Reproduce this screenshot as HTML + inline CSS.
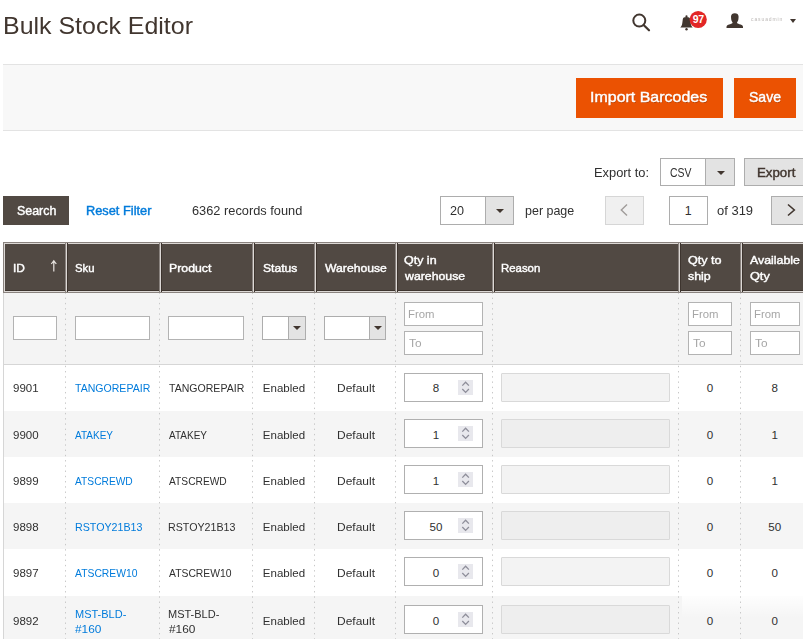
<!DOCTYPE html>
<html><head><meta charset="utf-8"><style>
*{box-sizing:border-box;margin:0;padding:0}
html,body{width:803px;height:639px;overflow:hidden;background:#fff;font-family:"Liberation Sans",sans-serif;color:#303030}
.a{position:absolute}
.t{white-space:nowrap}
</style></head><body>
<div class="a t" style="left:2.75px;top:14.13px;font-size:23.8px;line-height:23.8px;color:#41362f;font-weight:normal;letter-spacing:0.000px;transform:scaleX(1.0484);transform-origin:0 0;">Bulk Stock Editor</div>
<svg class="a" style="left:628px;top:9px" width="26" height="26" viewBox="0 0 26 26">
<circle cx="11.3" cy="11.6" r="6" fill="none" stroke="#41362f" stroke-width="2"/>
<line x1="15.6" y1="16" x2="21" y2="21.3" stroke="#41362f" stroke-width="2.2" stroke-linecap="round"/>
</svg>
<svg class="a" style="left:676px;top:10px" width="36" height="24" viewBox="0 0 36 24">
<path d="M4.3 17.4 C5.3 16.6 6 15.5 6.3 13 L6.8 9.2 C7 7.7 8 7 10.5 7 C13 7 14 7.7 14.2 9.2 L14.7 13 C15 15.5 15.7 16.6 16.7 17.4 Z" fill="#41362f"/>
<circle cx="10.5" cy="6.4" r="1.1" fill="#41362f"/>
<circle cx="10.5" cy="19.2" r="1.2" fill="#41362f"/>
<circle cx="22.2" cy="9.5" r="8.6" fill="#e22626"/>
<text x="22.2" y="13.1" font-family="Liberation Sans" font-weight="bold" font-size="10.5" fill="#fff" text-anchor="middle" letter-spacing="-0.3">97</text>
</svg>
<svg class="a" style="left:724px;top:10px" width="24" height="22" viewBox="0 0 24 22">
<path d="M7 6.8 C7 4.3 8.6 3.2 10.8 3.2 C13 3.2 14.6 4.3 14.6 6.8 L14.4 9.2 C14.2 10.6 13.6 11.6 13.1 12.2 L13.1 13 C13.6 13.6 15 14 16.6 14.5 C18.4 15.1 19 15.8 19 17 L19 18 L2.5 18 L2.5 17 C2.5 15.8 3.2 15.1 5 14.5 C6.6 14 8 13.6 8.5 13 L8.5 12.2 C8 11.6 7.4 10.6 7.2 9.2 Z" fill="#41362f"/>
</svg>
<div class="a t" style="left:751px;top:16.3px;font-size:5px;line-height:6px;color:#8d8683;letter-spacing:0.9px;filter:blur(0.3px);opacity:.6">casuadmin</div>
<div class="a" style="left:790px;top:19.3px;width:0;height:0;border-left:3.4px solid transparent;border-right:3.4px solid transparent;border-top:4.4px solid #41362f"></div>
<div class="a " style="left:3px;top:64px;width:800px;height:67px;background:#f8f8f8;border-top:1px solid #e3e3e3;border-bottom:1px solid #e3e3e3"></div>
<div class="a " style="left:576px;top:78px;width:147px;height:40px;background:#eb5202"></div>
<div class="a t" style="left:589.63px;top:90.11px;font-size:14.5px;line-height:14.5px;color:#fff;font-weight:normal;letter-spacing:0.000px;transform:scaleX(1.1016);transform-origin:0 0;-webkit-text-stroke:0.4px #fff;text-shadow:0.5px 0.5px 0 rgba(0,0,0,.25)">Import Barcodes</div>
<div class="a " style="left:734px;top:78px;width:62px;height:40px;background:#eb5202"></div>
<div class="a t" style="left:748.66px;top:90.11px;font-size:14.5px;line-height:14.5px;color:#fff;font-weight:normal;letter-spacing:0.000px;transform:scaleX(0.9683);transform-origin:0 0;-webkit-text-stroke:0.4px #fff;text-shadow:0.5px 0.5px 0 rgba(0,0,0,.25)">Save</div>
<div class="a t" style="left:594.14px;top:167.02px;font-size:12.4px;line-height:12.4px;color:#303030;font-weight:normal;letter-spacing:0.000px;transform:scaleX(1.0382);transform-origin:0 0;">Export to:</div>
<div class="a " style="left:660px;top:158px;width:75px;height:28px;background:#fff;border:1px solid #adadad"></div>
<div class="a " style="left:705px;top:158px;width:30px;height:28px;background:#e3e3e3;border:1px solid #adadad"></div>
<div class="a t" style="left:669.97px;top:167.02px;font-size:12.4px;line-height:12.4px;color:#303030;font-weight:normal;letter-spacing:0.000px;transform:scaleX(0.8437);transform-origin:0 0;">CSV</div>
<div class="a" style="left:716.5px;top:170.5px;width:0;height:0;border-left:4px solid transparent;border-right:4px solid transparent;border-top:4.5px solid #41362f"></div>
<div class="a " style="left:744px;top:158px;width:66px;height:28px;background:#e3e3e3;border:1px solid #adadad"></div>
<div class="a t" style="left:757.21px;top:166.92px;font-size:12px;line-height:12px;color:#41362f;font-weight:normal;letter-spacing:0.000px;transform:scaleX(1.1060);transform-origin:0 0;-webkit-text-stroke:0.4px #41362f;">Export</div>
<div class="a " style="left:3px;top:196px;width:66px;height:29px;background:#514943"></div>
<div class="a t" style="left:17.14px;top:204.72px;font-size:12px;line-height:12px;color:#fff;font-weight:normal;letter-spacing:0.000px;transform:scaleX(1.0354);transform-origin:0 0;-webkit-text-stroke:0.4px #fff;">Search</div>
<div class="a t" style="left:86.15px;top:204.72px;font-size:12px;line-height:12px;color:#007bdb;font-weight:normal;letter-spacing:0.000px;transform:scaleX(1.0661);transform-origin:0 0;-webkit-text-stroke:0.4px #007bdb;">Reset Filter</div>
<div class="a t" style="left:191.95px;top:205.32px;font-size:12.4px;line-height:12.4px;color:#303030;font-weight:normal;letter-spacing:0.000px;transform:scaleX(1.0325);transform-origin:0 0;">6362 records found</div>
<div class="a " style="left:440px;top:196px;width:74px;height:29px;background:#fff;border:1px solid #adadad"></div>
<div class="a " style="left:485px;top:196px;width:29px;height:29px;background:#e3e3e3;border:1px solid #adadad"></div>
<div class="a t" style="left:450.07px;top:205.32px;font-size:12.4px;line-height:12.4px;color:#303030;font-weight:normal;letter-spacing:0.000px;transform:scaleX(1.0171);transform-origin:0 0;">20</div>
<div class="a" style="left:495.5px;top:209px;width:0;height:0;border-left:4px solid transparent;border-right:4px solid transparent;border-top:4.5px solid #41362f"></div>
<div class="a t" style="left:525.0px;top:205.23px;font-size:12.6px;line-height:12.6px;color:#303030;font-weight:normal;letter-spacing:0.000px;transform:scaleX(0.9906);transform-origin:0 0;">per page</div>
<div class="a " style="left:605px;top:196px;width:39px;height:29px;background:#f0f0f0;border:1px solid #d6d6d6"></div>
<svg class="a" style="left:619px;top:203px" width="10" height="14" viewBox="0 0 10 14"><path d="M8 1.5 L2.3 7 L8 12.5" fill="none" stroke="#a09c9a" stroke-width="1.4"/></svg>
<div class="a " style="left:669px;top:196px;width:39px;height:29px;background:#fff;border:1px solid #adadad"></div>
<div class="a t" style="left:588.20px;width:200px;text-align:center;top:205.12px;font-size:12.4px;line-height:12.4px;color:#303030;font-weight:normal;letter-spacing:0.000px;">1</div>
<div class="a t" style="left:716.95px;top:205.12px;font-size:12.4px;line-height:12.4px;color:#303030;font-weight:normal;letter-spacing:0.000px;transform:scaleX(1.0472);transform-origin:0 0;">of 319</div>
<div class="a " style="left:771px;top:196px;width:39px;height:29px;background:#e3e3e3;border:1px solid #adadad"></div>
<svg class="a" style="left:786px;top:203px" width="10" height="14" viewBox="0 0 10 14"><path d="M2 1.5 L8.3 7 L2 12.5" fill="none" stroke="#41362f" stroke-width="1.6"/></svg>
<div class="a" style="left:3px;top:242px;width:806px;height:51px;background:#514943;border:1px solid #8a837f"></div>
<div class="a" style="left:4px;top:243px;width:804px;height:49px;border:1px solid #dcd8d5;border-right:none"></div>
<div class="a" style="left:5px;top:290px;width:803px;height:1px;background:#3d342e"></div>
<div class="a" style="left:65px;top:243px;width:3px;height:49px;background:#dcd8d5;border-left:1px solid #8a837f;border-right:1px solid #3d342e"></div>
<div class="a" style="left:159px;top:243px;width:3px;height:49px;background:#dcd8d5;border-left:1px solid #8a837f;border-right:1px solid #3d342e"></div>
<div class="a" style="left:252px;top:243px;width:3px;height:49px;background:#dcd8d5;border-left:1px solid #8a837f;border-right:1px solid #3d342e"></div>
<div class="a" style="left:314px;top:243px;width:3px;height:49px;background:#dcd8d5;border-left:1px solid #8a837f;border-right:1px solid #3d342e"></div>
<div class="a" style="left:395px;top:243px;width:3px;height:49px;background:#dcd8d5;border-left:1px solid #8a837f;border-right:1px solid #3d342e"></div>
<div class="a" style="left:492px;top:243px;width:3px;height:49px;background:#dcd8d5;border-left:1px solid #8a837f;border-right:1px solid #3d342e"></div>
<div class="a" style="left:678px;top:243px;width:3px;height:49px;background:#dcd8d5;border-left:1px solid #8a837f;border-right:1px solid #3d342e"></div>
<div class="a" style="left:740px;top:243px;width:3px;height:49px;background:#dcd8d5;border-left:1px solid #8a837f;border-right:1px solid #3d342e"></div>
<div class="a t" style="left:12.9px;top:262.70px;font-size:11px;line-height:11px;color:#fff;font-weight:normal;letter-spacing:0.000px;transform:scaleX(1.0789);transform-origin:0 0;-webkit-text-stroke:0.4px #fff;">ID</div>
<div class="a t" style="left:74.98px;top:262.70px;font-size:11px;line-height:11px;color:#fff;font-weight:normal;letter-spacing:0.000px;transform:scaleX(1.0323);transform-origin:0 0;-webkit-text-stroke:0.4px #fff;">Sku</div>
<div class="a t" style="left:169.39px;top:262.70px;font-size:11px;line-height:11px;color:#fff;font-weight:normal;letter-spacing:0.000px;transform:scaleX(1.1176);transform-origin:0 0;-webkit-text-stroke:0.4px #fff;">Product</div>
<div class="a t" style="left:262.85px;top:262.70px;font-size:11px;line-height:11px;color:#fff;font-weight:normal;letter-spacing:0.000px;transform:scaleX(1.1018);transform-origin:0 0;-webkit-text-stroke:0.4px #fff;">Status</div>
<div class="a t" style="left:324.75px;top:262.70px;font-size:11px;line-height:11px;color:#fff;font-weight:normal;letter-spacing:0.000px;transform:scaleX(1.1080);transform-origin:0 0;-webkit-text-stroke:0.4px #fff;">Warehouse</div>
<div class="a t" style="left:404.41px;top:255.20px;font-size:11px;line-height:11px;color:#fff;font-weight:normal;letter-spacing:0.000px;transform:scaleX(1.1336);transform-origin:0 0;-webkit-text-stroke:0.4px #fff;">Qty in</div>
<div class="a t" style="left:405.02px;top:270.60px;font-size:11px;line-height:11px;color:#fff;font-weight:normal;letter-spacing:0.000px;transform:scaleX(1.1190);transform-origin:0 0;-webkit-text-stroke:0.4px #fff;">warehouse</div>
<div class="a t" style="left:687.7px;top:255.20px;font-size:11px;line-height:11px;color:#fff;font-weight:normal;letter-spacing:0.000px;transform:scaleX(1.1442);transform-origin:0 0;-webkit-text-stroke:0.4px #fff;">Qty to</div>
<div class="a t" style="left:687.95px;top:270.60px;font-size:11px;line-height:11px;color:#fff;font-weight:normal;letter-spacing:0.000px;transform:scaleX(1.1270);transform-origin:0 0;-webkit-text-stroke:0.4px #fff;">ship</div>
<div class="a t" style="left:750.28px;top:255.20px;font-size:11px;line-height:11px;color:#fff;font-weight:normal;letter-spacing:0.000px;transform:scaleX(1.1240);transform-origin:0 0;-webkit-text-stroke:0.4px #fff;">Available</div>
<div class="a t" style="left:749.7px;top:270.60px;font-size:11px;line-height:11px;color:#fff;font-weight:normal;letter-spacing:0.000px;transform:scaleX(1.1540);transform-origin:0 0;-webkit-text-stroke:0.4px #fff;">Qty</div>
<div class="a t" style="left:501.36px;top:262.70px;font-size:11px;line-height:11px;color:#fff;font-weight:normal;letter-spacing:0.000px;transform:scaleX(1.0367);transform-origin:0 0;-webkit-text-stroke:0.4px #fff;">Reason</div>
<svg class="a" style="left:50px;top:259px" width="8" height="14" viewBox="0 0 8 14"><path d="M3.8 12.5 L3.8 2.5 M1.3 5 L3.8 1.8 L6.3 5" fill="none" stroke="#e8e4e0" stroke-width="1.2"/></svg>
<div class="a " style="left:3px;top:293px;width:806px;height:72px;background:#f4f4f4;border-left:1px solid #d6d6d6;border-bottom:1px solid #d6d6d6"></div>
<div class="a " style="left:13px;top:316px;width:44px;height:24px;background:#fff;border:1px solid #b3b3b3"></div>
<div class="a " style="left:75px;top:316px;width:75px;height:24px;background:#fff;border:1px solid #b3b3b3"></div>
<div class="a " style="left:168px;top:316px;width:76px;height:24px;background:#fff;border:1px solid #b3b3b3"></div>
<div class="a " style="left:262px;top:316px;width:44px;height:24px;background:#fff;border:1px solid #adadad"></div>
<div class="a " style="left:288px;top:316px;width:18px;height:24px;background:#e3e3e3;border:1px solid #adadad"></div>
<div class="a" style="left:293px;top:326px;width:0;height:0;border-left:4px solid transparent;border-right:4px solid transparent;border-top:4.5px solid #41362f"></div>
<div class="a " style="left:324px;top:316px;width:62px;height:24px;background:#fff;border:1px solid #adadad"></div>
<div class="a " style="left:369px;top:316px;width:17px;height:24px;background:#e3e3e3;border:1px solid #adadad"></div>
<div class="a" style="left:373.5px;top:326px;width:0;height:0;border-left:4px solid transparent;border-right:4px solid transparent;border-top:4.5px solid #41362f"></div>
<div class="a " style="left:404px;top:302px;width:79px;height:24px;background:#fff;border:1px solid #b3b3b3"></div>
<div class="a t" style="left:408.07px;top:308.70px;font-size:11px;line-height:11px;color:#a6a6a6;font-weight:normal;letter-spacing:0.000px;transform:scaleX(1.0317);transform-origin:0 0;">From</div>
<div class="a " style="left:404px;top:331px;width:79px;height:24px;background:#fff;border:1px solid #b3b3b3"></div>
<div class="a t" style="left:408.73px;top:337.70px;font-size:11px;line-height:11px;color:#a6a6a6;font-weight:normal;letter-spacing:0.000px;transform:scaleX(1.0771);transform-origin:0 0;">To</div>
<div class="a " style="left:688px;top:302px;width:44px;height:24px;background:#fff;border:1px solid #b3b3b3"></div>
<div class="a t" style="left:692.07px;top:308.70px;font-size:11px;line-height:11px;color:#a6a6a6;font-weight:normal;letter-spacing:0.000px;transform:scaleX(1.0317);transform-origin:0 0;">From</div>
<div class="a " style="left:688px;top:331px;width:44px;height:24px;background:#fff;border:1px solid #b3b3b3"></div>
<div class="a t" style="left:692.73px;top:337.70px;font-size:11px;line-height:11px;color:#a6a6a6;font-weight:normal;letter-spacing:0.000px;transform:scaleX(1.0771);transform-origin:0 0;">To</div>
<div class="a " style="left:750px;top:302px;width:50px;height:24px;background:#fff;border:1px solid #b3b3b3"></div>
<div class="a t" style="left:754.07px;top:308.70px;font-size:11px;line-height:11px;color:#a6a6a6;font-weight:normal;letter-spacing:0.000px;transform:scaleX(1.0317);transform-origin:0 0;">From</div>
<div class="a " style="left:750px;top:331px;width:50px;height:24px;background:#fff;border:1px solid #b3b3b3"></div>
<div class="a t" style="left:754.73px;top:337.70px;font-size:11px;line-height:11px;color:#a6a6a6;font-weight:normal;letter-spacing:0.000px;transform:scaleX(1.0771);transform-origin:0 0;">To</div>
<div class="a" style="left:4px;top:364.5px;width:805px;height:46.2px;background:#ffffff"></div>
<div class="a t" style="left:12.66px;top:382.31px;font-size:11.6px;line-height:11.6px;color:#303030;font-weight:normal;letter-spacing:0.000px;transform:scaleX(0.9919);transform-origin:0 0;">9901</div>
<div class="a t" style="left:75.16px;top:382.31px;font-size:11.6px;line-height:11.6px;color:#007bdb;font-weight:normal;letter-spacing:0.000px;transform:scaleX(0.9104);transform-origin:0 0;">TANGOREPAIR</div>
<div class="a t" style="left:168.76px;top:382.31px;font-size:11.6px;line-height:11.6px;color:#303030;font-weight:normal;letter-spacing:0.000px;transform:scaleX(0.9104);transform-origin:0 0;">TANGOREPAIR</div>
<div class="a t" style="left:183.70px;width:200px;text-align:center;top:382.31px;font-size:11.6px;line-height:11.6px;color:#303030;font-weight:normal;letter-spacing:0.000px;transform:scaleX(0.9936);transform-origin:50% 0;">Enabled</div>
<div class="a t" style="left:255.60px;width:200px;text-align:center;top:382.31px;font-size:11.6px;line-height:11.6px;color:#303030;font-weight:normal;letter-spacing:0.000px;transform:scaleX(1.0334);transform-origin:50% 0;">Default</div>
<div class="a " style="left:404px;top:373px;width:79px;height:29px;background:#fff;border:1px solid #b0b0b0"></div>
<div class="a t" style="left:336.00px;width:200px;text-align:center;top:382.31px;font-size:11.6px;line-height:11.6px;color:#303030;font-weight:normal;letter-spacing:0.000px;">8</div>
<div class="a" style="left:458px;top:380px;width:15px;height:15px;background:#e8e8ed"></div>
<svg class="a" style="left:458px;top:380px" width="15" height="15" viewBox="0 0 15 15"><path d="M4.3 5.6 L7.6 2.2 L10.9 5.6 M4.3 9 L7.6 12.4 L10.9 9" fill="none" stroke="#8e8e9a" stroke-width="1.3"/></svg>
<div class="a " style="left:501px;top:373px;width:169px;height:29px;background:#f3f3f3;border:1px solid #d9d9d9;border-radius:1px"></div>
<div class="a t" style="left:610.00px;width:200px;text-align:center;top:382.31px;font-size:11.6px;line-height:11.6px;color:#303030;font-weight:normal;letter-spacing:0.000px;">0</div>
<div class="a t" style="left:674.70px;width:200px;text-align:center;top:382.31px;font-size:11.6px;line-height:11.6px;color:#303030;font-weight:normal;letter-spacing:0.000px;">8</div>
<div class="a" style="left:4px;top:410.7px;width:805px;height:46.2px;background:#f5f5f5"></div>
<div class="a t" style="left:12.66px;top:428.51px;font-size:11.6px;line-height:11.6px;color:#303030;font-weight:normal;letter-spacing:0.000px;transform:scaleX(0.9919);transform-origin:0 0;">9900</div>
<div class="a t" style="left:75.38px;top:428.51px;font-size:11.6px;line-height:11.6px;color:#007bdb;font-weight:normal;letter-spacing:0.000px;transform:scaleX(0.8643);transform-origin:0 0;">ATAKEY</div>
<div class="a t" style="left:168.98px;top:428.51px;font-size:11.6px;line-height:11.6px;color:#303030;font-weight:normal;letter-spacing:0.000px;transform:scaleX(0.8643);transform-origin:0 0;">ATAKEY</div>
<div class="a t" style="left:183.70px;width:200px;text-align:center;top:428.51px;font-size:11.6px;line-height:11.6px;color:#303030;font-weight:normal;letter-spacing:0.000px;transform:scaleX(0.9936);transform-origin:50% 0;">Enabled</div>
<div class="a t" style="left:255.60px;width:200px;text-align:center;top:428.51px;font-size:11.6px;line-height:11.6px;color:#303030;font-weight:normal;letter-spacing:0.000px;transform:scaleX(1.0334);transform-origin:50% 0;">Default</div>
<div class="a " style="left:404px;top:419px;width:79px;height:29px;background:#fff;border:1px solid #b0b0b0"></div>
<div class="a t" style="left:336.00px;width:200px;text-align:center;top:428.51px;font-size:11.6px;line-height:11.6px;color:#303030;font-weight:normal;letter-spacing:0.000px;">1</div>
<div class="a" style="left:458px;top:426px;width:15px;height:15px;background:#e8e8ed"></div>
<svg class="a" style="left:458px;top:426px" width="15" height="15" viewBox="0 0 15 15"><path d="M4.3 5.6 L7.6 2.2 L10.9 5.6 M4.3 9 L7.6 12.4 L10.9 9" fill="none" stroke="#8e8e9a" stroke-width="1.3"/></svg>
<div class="a " style="left:501px;top:419px;width:169px;height:29px;background:#eeeeee;border:1px solid #d9d9d9;border-radius:1px"></div>
<div class="a t" style="left:610.00px;width:200px;text-align:center;top:428.51px;font-size:11.6px;line-height:11.6px;color:#303030;font-weight:normal;letter-spacing:0.000px;">0</div>
<div class="a t" style="left:674.70px;width:200px;text-align:center;top:428.51px;font-size:11.6px;line-height:11.6px;color:#303030;font-weight:normal;letter-spacing:0.000px;">1</div>
<div class="a" style="left:4px;top:456.9px;width:805px;height:46.2px;background:#ffffff"></div>
<div class="a t" style="left:12.66px;top:474.71px;font-size:11.6px;line-height:11.6px;color:#303030;font-weight:normal;letter-spacing:0.000px;transform:scaleX(0.9919);transform-origin:0 0;">9899</div>
<div class="a t" style="left:75.38px;top:474.71px;font-size:11.6px;line-height:11.6px;color:#007bdb;font-weight:normal;letter-spacing:0.000px;transform:scaleX(0.8819);transform-origin:0 0;">ATSCREWD</div>
<div class="a t" style="left:168.98px;top:474.71px;font-size:11.6px;line-height:11.6px;color:#303030;font-weight:normal;letter-spacing:0.000px;transform:scaleX(0.8819);transform-origin:0 0;">ATSCREWD</div>
<div class="a t" style="left:183.70px;width:200px;text-align:center;top:474.71px;font-size:11.6px;line-height:11.6px;color:#303030;font-weight:normal;letter-spacing:0.000px;transform:scaleX(0.9936);transform-origin:50% 0;">Enabled</div>
<div class="a t" style="left:255.60px;width:200px;text-align:center;top:474.71px;font-size:11.6px;line-height:11.6px;color:#303030;font-weight:normal;letter-spacing:0.000px;transform:scaleX(1.0334);transform-origin:50% 0;">Default</div>
<div class="a " style="left:404px;top:465px;width:79px;height:29px;background:#fff;border:1px solid #b0b0b0"></div>
<div class="a t" style="left:336.00px;width:200px;text-align:center;top:474.71px;font-size:11.6px;line-height:11.6px;color:#303030;font-weight:normal;letter-spacing:0.000px;">1</div>
<div class="a" style="left:458px;top:472px;width:15px;height:15px;background:#e8e8ed"></div>
<svg class="a" style="left:458px;top:472px" width="15" height="15" viewBox="0 0 15 15"><path d="M4.3 5.6 L7.6 2.2 L10.9 5.6 M4.3 9 L7.6 12.4 L10.9 9" fill="none" stroke="#8e8e9a" stroke-width="1.3"/></svg>
<div class="a " style="left:501px;top:465px;width:169px;height:29px;background:#f3f3f3;border:1px solid #d9d9d9;border-radius:1px"></div>
<div class="a t" style="left:610.00px;width:200px;text-align:center;top:474.71px;font-size:11.6px;line-height:11.6px;color:#303030;font-weight:normal;letter-spacing:0.000px;">0</div>
<div class="a t" style="left:674.70px;width:200px;text-align:center;top:474.71px;font-size:11.6px;line-height:11.6px;color:#303030;font-weight:normal;letter-spacing:0.000px;">1</div>
<div class="a" style="left:4px;top:503.1px;width:805px;height:46.2px;background:#f5f5f5"></div>
<div class="a t" style="left:12.66px;top:520.91px;font-size:11.6px;line-height:11.6px;color:#303030;font-weight:normal;letter-spacing:0.000px;transform:scaleX(0.9919);transform-origin:0 0;">9898</div>
<div class="a t" style="left:74.52px;top:520.91px;font-size:11.6px;line-height:11.6px;color:#007bdb;font-weight:normal;letter-spacing:0.000px;transform:scaleX(0.9207);transform-origin:0 0;">RSTOY21B13</div>
<div class="a t" style="left:168.12px;top:520.91px;font-size:11.6px;line-height:11.6px;color:#303030;font-weight:normal;letter-spacing:0.000px;transform:scaleX(0.9207);transform-origin:0 0;">RSTOY21B13</div>
<div class="a t" style="left:183.70px;width:200px;text-align:center;top:520.91px;font-size:11.6px;line-height:11.6px;color:#303030;font-weight:normal;letter-spacing:0.000px;transform:scaleX(0.9936);transform-origin:50% 0;">Enabled</div>
<div class="a t" style="left:255.60px;width:200px;text-align:center;top:520.91px;font-size:11.6px;line-height:11.6px;color:#303030;font-weight:normal;letter-spacing:0.000px;transform:scaleX(1.0334);transform-origin:50% 0;">Default</div>
<div class="a " style="left:404px;top:511px;width:79px;height:29px;background:#fff;border:1px solid #b0b0b0"></div>
<div class="a t" style="left:336.00px;width:200px;text-align:center;top:520.91px;font-size:11.6px;line-height:11.6px;color:#303030;font-weight:normal;letter-spacing:0.000px;">50</div>
<div class="a" style="left:458px;top:518px;width:15px;height:15px;background:#e8e8ed"></div>
<svg class="a" style="left:458px;top:518px" width="15" height="15" viewBox="0 0 15 15"><path d="M4.3 5.6 L7.6 2.2 L10.9 5.6 M4.3 9 L7.6 12.4 L10.9 9" fill="none" stroke="#8e8e9a" stroke-width="1.3"/></svg>
<div class="a " style="left:501px;top:511px;width:169px;height:29px;background:#eeeeee;border:1px solid #d9d9d9;border-radius:1px"></div>
<div class="a t" style="left:610.00px;width:200px;text-align:center;top:520.91px;font-size:11.6px;line-height:11.6px;color:#303030;font-weight:normal;letter-spacing:0.000px;">0</div>
<div class="a t" style="left:674.70px;width:200px;text-align:center;top:520.91px;font-size:11.6px;line-height:11.6px;color:#303030;font-weight:normal;letter-spacing:0.000px;">50</div>
<div class="a" style="left:4px;top:549.3px;width:805px;height:46.2px;background:#ffffff"></div>
<div class="a t" style="left:12.66px;top:567.11px;font-size:11.6px;line-height:11.6px;color:#303030;font-weight:normal;letter-spacing:0.000px;transform:scaleX(0.9919);transform-origin:0 0;">9897</div>
<div class="a t" style="left:75.38px;top:567.11px;font-size:11.6px;line-height:11.6px;color:#007bdb;font-weight:normal;letter-spacing:0.000px;transform:scaleX(0.8935);transform-origin:0 0;">ATSCREW10</div>
<div class="a t" style="left:168.98px;top:567.11px;font-size:11.6px;line-height:11.6px;color:#303030;font-weight:normal;letter-spacing:0.000px;transform:scaleX(0.8935);transform-origin:0 0;">ATSCREW10</div>
<div class="a t" style="left:183.70px;width:200px;text-align:center;top:567.11px;font-size:11.6px;line-height:11.6px;color:#303030;font-weight:normal;letter-spacing:0.000px;transform:scaleX(0.9936);transform-origin:50% 0;">Enabled</div>
<div class="a t" style="left:255.60px;width:200px;text-align:center;top:567.11px;font-size:11.6px;line-height:11.6px;color:#303030;font-weight:normal;letter-spacing:0.000px;transform:scaleX(1.0334);transform-origin:50% 0;">Default</div>
<div class="a " style="left:404px;top:557px;width:79px;height:29px;background:#fff;border:1px solid #b0b0b0"></div>
<div class="a t" style="left:336.00px;width:200px;text-align:center;top:567.11px;font-size:11.6px;line-height:11.6px;color:#303030;font-weight:normal;letter-spacing:0.000px;">0</div>
<div class="a" style="left:458px;top:564px;width:15px;height:15px;background:#e8e8ed"></div>
<svg class="a" style="left:458px;top:564px" width="15" height="15" viewBox="0 0 15 15"><path d="M4.3 5.6 L7.6 2.2 L10.9 5.6 M4.3 9 L7.6 12.4 L10.9 9" fill="none" stroke="#8e8e9a" stroke-width="1.3"/></svg>
<div class="a " style="left:501px;top:557px;width:169px;height:29px;background:#f3f3f3;border:1px solid #d9d9d9;border-radius:1px"></div>
<div class="a t" style="left:610.00px;width:200px;text-align:center;top:567.11px;font-size:11.6px;line-height:11.6px;color:#303030;font-weight:normal;letter-spacing:0.000px;">0</div>
<div class="a t" style="left:674.70px;width:200px;text-align:center;top:567.11px;font-size:11.6px;line-height:11.6px;color:#303030;font-weight:normal;letter-spacing:0.000px;">0</div>
<div class="a" style="left:4px;top:595.5px;width:805px;height:64.5px;background:#f5f5f5"></div>
<div class="a t" style="left:12.66px;top:615.01px;font-size:11.6px;line-height:11.6px;color:#303030;font-weight:normal;letter-spacing:0.000px;transform:scaleX(0.9919);transform-origin:0 0;">9892</div>
<div class="a t" style="left:74.5px;top:607.81px;font-size:11.6px;line-height:11.6px;color:#007bdb;font-weight:normal;letter-spacing:0.000px;transform:scaleX(0.9480);transform-origin:0 0;">MST-BLD-</div>
<div class="a t" style="left:75.35px;top:623.01px;font-size:11.6px;line-height:11.6px;color:#007bdb;font-weight:normal;letter-spacing:0.000px;transform:scaleX(1.0229);transform-origin:0 0;">#160</div>
<div class="a t" style="left:168.1px;top:607.81px;font-size:11.6px;line-height:11.6px;color:#303030;font-weight:normal;letter-spacing:0.000px;transform:scaleX(0.9480);transform-origin:0 0;">MST-BLD-</div>
<div class="a t" style="left:168.95px;top:623.01px;font-size:11.6px;line-height:11.6px;color:#303030;font-weight:normal;letter-spacing:0.000px;transform:scaleX(1.0229);transform-origin:0 0;">#160</div>
<div class="a t" style="left:183.70px;width:200px;text-align:center;top:615.01px;font-size:11.6px;line-height:11.6px;color:#303030;font-weight:normal;letter-spacing:0.000px;transform:scaleX(0.9936);transform-origin:50% 0;">Enabled</div>
<div class="a t" style="left:255.60px;width:200px;text-align:center;top:615.01px;font-size:11.6px;line-height:11.6px;color:#303030;font-weight:normal;letter-spacing:0.000px;transform:scaleX(1.0334);transform-origin:50% 0;">Default</div>
<div class="a " style="left:404px;top:605px;width:79px;height:29px;background:#fff;border:1px solid #b0b0b0"></div>
<div class="a t" style="left:336.00px;width:200px;text-align:center;top:615.01px;font-size:11.6px;line-height:11.6px;color:#303030;font-weight:normal;letter-spacing:0.000px;">0</div>
<div class="a" style="left:458px;top:612px;width:15px;height:15px;background:#e8e8ed"></div>
<svg class="a" style="left:458px;top:612px" width="15" height="15" viewBox="0 0 15 15"><path d="M4.3 5.6 L7.6 2.2 L10.9 5.6 M4.3 9 L7.6 12.4 L10.9 9" fill="none" stroke="#8e8e9a" stroke-width="1.3"/></svg>
<div class="a " style="left:501px;top:605px;width:169px;height:29px;background:#eeeeee;border:1px solid #d9d9d9;border-radius:1px"></div>
<div class="a t" style="left:610.00px;width:200px;text-align:center;top:615.01px;font-size:11.6px;line-height:11.6px;color:#303030;font-weight:normal;letter-spacing:0.000px;">0</div>
<div class="a t" style="left:674.70px;width:200px;text-align:center;top:615.01px;font-size:11.6px;line-height:11.6px;color:#303030;font-weight:normal;letter-spacing:0.000px;">0</div>
<div class="a" style="left:682px;top:596px;width:121px;height:22px;background:linear-gradient(180deg,rgba(255,255,255,.85),rgba(255,255,255,0))"></div>
<div class="a" style="left:3px;top:293px;width:1px;height:346px;background:#d6d6d6"></div>
<svg class="a" style="left:0;top:293px" width="803" height="346" viewBox="0 0 803 346"><g stroke="#c8c8c8" stroke-width="1" stroke-dasharray="1.4 3.84" stroke-dashoffset="0.6"><line x1="65.5" y1="0" x2="65.5" y2="346" /><line x1="159.5" y1="0" x2="159.5" y2="346" /><line x1="252.5" y1="0" x2="252.5" y2="346" /><line x1="314.5" y1="0" x2="314.5" y2="346" /><line x1="395.5" y1="0" x2="395.5" y2="346" /><line x1="492.5" y1="0" x2="492.5" y2="346" /><line x1="678.5" y1="0" x2="678.5" y2="346" /><line x1="740.5" y1="0" x2="740.5" y2="346" /></g></svg>
</body></html>
